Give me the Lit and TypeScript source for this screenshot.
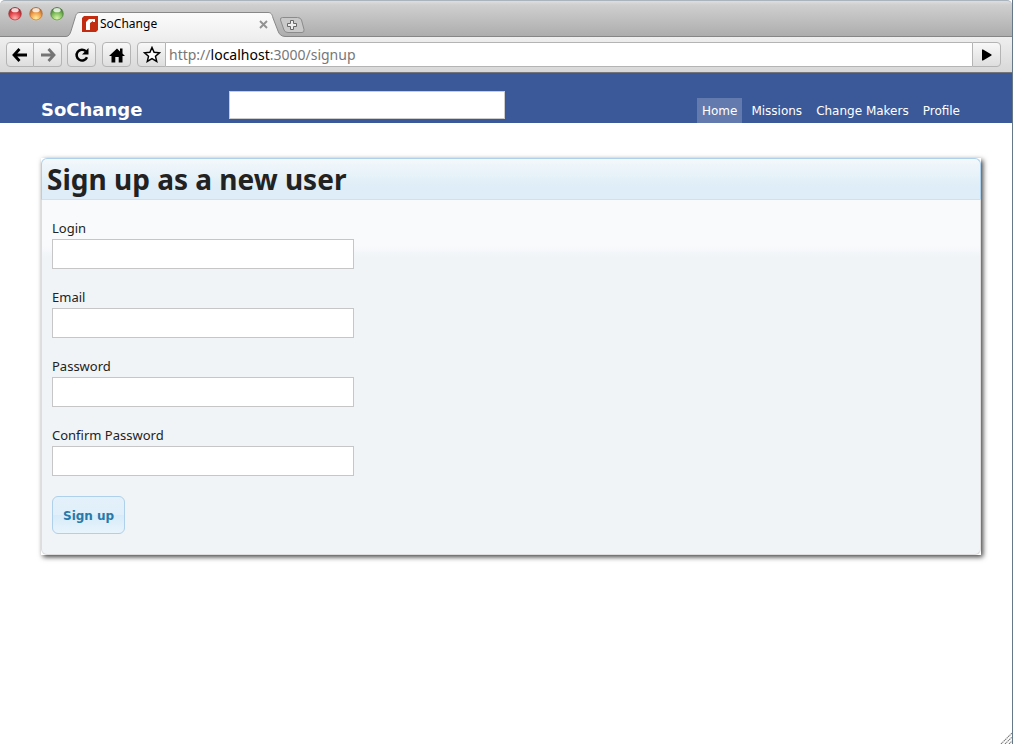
import { LitElement, html, css } from "lit";
import { customElement, property } from "lit/decorators.js";

@customElement("browser-chrome")
class BrowserChrome extends LitElement {
  @property() page = "";

  static styles = css`
    :host { display: block; font-family: "Noto Sans", "Open Sans", sans-serif; }
    svg { display: block; }
    button { margin: 0; padding: 0; font: inherit; color: #000; }
    .titlebar {
      display: flex; align-items: flex-end; height: 37px; box-sizing: border-box;
      border-top: 1px solid #a9b4bd; border-bottom: 1px solid #868686;
      border-radius: 5px 5px 0 0;
      background: linear-gradient(#dedede, #cfcfcf 4px, #adadad);
    }
    .lights { display: flex; gap: 7px; align-self: flex-start; padding: 5px 2px 0 8px; }
    .light { width: 14px; height: 15px; border: 0; background: none; }
    .tab { display: flex; height: 25px; margin-bottom: -1px; }
    .edge { flex: none; }
    .tab-body {
      display: flex; align-items: center; width: 188px; box-sizing: border-box; padding: 0 0 2px 2px;
      border-top: 1px solid #888; background: linear-gradient(#fbfbfb, #efefef);
    }
    .tab-title { flex: 1; font-size: 12px; line-height: 16px; padding-left: 2px; }
    .close { border: 0; background: none; }
    .new-tab { border: 0; background: none; margin-bottom: 3px; margin-left: -6px; }
    .toolbar {
      display: flex; align-items: center; height: 36px; box-sizing: border-box;
      padding: 0 11px 0 6px; border-bottom: 1px solid #73777d;
      background: linear-gradient(#efefef, #d8d8d8);
    }
    .tool {
      display: flex; align-items: center; justify-content: center;
      width: 29px; height: 25px; box-sizing: border-box;
      border: 1px solid #b4b4b4; border-radius: 4px;
      background: linear-gradient(#f8f8f8, #dedede);
    }
    .back { width: 28px; border-radius: 4px 0 0 4px; }
    .forward { width: 28px; border-left: 0; border-radius: 0 4px 4px 0; margin-right: 5px; }
    .reload, .home { margin-right: 6px; }
    .star { border-radius: 4px 0 0 4px; }
    .go { border-radius: 0 4px 4px 0; }
    .address {
      flex: 1; display: flex; align-items: center; height: 25px; box-sizing: border-box;
      border: solid #b4b4b4; border-width: 1px 0; padding-left: 3px; background: #fff;
      font-size: 14px; line-height: 20px; color: #777;
    }
    .host { color: #000; }
  `;

  light(name: string, dark: string, mid: string, pale: string) {
    return html`<button class="light" aria-label=${name}>
      <svg width="14" height="15" viewBox="0 0 14 15">
        <defs>
          <radialGradient id=${"g" + name} cx=".5" cy=".85" r=".8">
            <stop offset="0" stop-color=${pale} /><stop offset=".55" stop-color=${mid} /><stop offset="1" stop-color=${dark} />
          </radialGradient>
        </defs>
        <circle cx="7" cy="8.4" r="6.4" fill="#eee" opacity=".7" />
        <circle cx="7" cy="7.8" r="6.3" fill=${`url(#g${name})`} stroke=${dark} stroke-width=".9" stroke-opacity=".7" />
        <ellipse cx="7" cy="4.2" rx="3.6" ry="2.1" fill="#fff" opacity=".8" />
      </svg>
    </button>`;
  }

  render() {
    return html`
      <div class="titlebar">
        <div class="lights">
          ${this.light("close", "#8e2227", "#e4464b", "#ffb3ae")}
          ${this.light("minimize", "#a75f28", "#f0a04c", "#fff0a0")}
          ${this.light("zoom", "#3f7330", "#7fbd5c", "#d9f5a8")}
        </div>
        <div class="tab">
          <svg class="edge" width="14" height="25" viewBox="0 0 14 25">
            <defs><linearGradient id="left" x2="0" y2="1"><stop stop-color="#fbfbfb" /><stop offset="1" stop-color="#efefef" /></linearGradient></defs>
            <path d="M0 25V24.5C3 24.3 4 22 5 19L9 6C10 2 11 .5 14 .5V25Z" fill="url(#left)" />
            <path d="M0 24.5C3 24.3 4 22 5 19L9 6C10 2 11 .5 14 .5" fill="none" stroke="#888" />
          </svg>
          <div class="tab-body">
            <svg width="16" height="16" viewBox="0 0 16 16">
              <path d="M2 0H16V14L14 16H0V2Z" fill="#c22d12" />
              <path d="M4 14V6L7 3H13V6H11V5L8 7V14Z" fill="#fff" />
            </svg>
            <span class="tab-title">${this.page}</span>
            <button class="close" aria-label="Close tab">
              <svg width="9" height="9" viewBox="0 0 9 9"><path d="M1 1L8 8M8 1L1 8" stroke="#929292" stroke-width="1.9" /></svg>
            </button>
          </div>
          <svg class="edge" width="17" height="25" viewBox="0 0 17 25">
            <defs><linearGradient id="right" x2="0" y2="1"><stop stop-color="#fbfbfb" /><stop offset="1" stop-color="#efefef" /></linearGradient></defs>
            <path d="M17 25V24.5C13 24.3 11 22 10 19L5 6C4 2 3 .5 0 .5V25Z" fill="url(#right)" />
            <path d="M17 24.5C13 24.3 11 22 10 19L5 6C4 2 3 .5 0 .5" fill="none" stroke="#888" />
          </svg>
        </div>
        <button class="new-tab" aria-label="New tab">
          <svg width="27" height="16" viewBox="0 0 27 16">
            <path d="M3.5 .5H18.5Q21.5 .5 22.5 3L25 12.5Q25.5 15.5 23 15.5H9Q6 15.5 5 13L1.5 3Q1 .5 3.5 .5Z" fill="#c9c9c9" stroke="#8b8b8b" />
            <path d="M11.5 3.5H14.5V6.5H17.5V9.5H14.5V12.5H11.5V9.5H8.5V6.5H11.5Z" fill="#eee" stroke="#686868" />
          </svg>
        </button>
      </div>
      <div class="toolbar">
        <button class="tool back" aria-label="Back">
          <svg width="16" height="14" viewBox="0 0 16 14"><path d="M7.5 1L2 7L7.5 13M2 7H15" fill="none" stroke="#000" stroke-width="2.8" /></svg>
        </button>
        <button class="tool forward" aria-label="Forward">
          <svg width="16" height="14" viewBox="0 0 16 14"><path d="M8.5 1L14 7L8.5 13M14 7H1" fill="none" stroke="#747474" stroke-width="2.8" /></svg>
        </button>
        <button class="tool reload" aria-label="Reload">
          <svg width="16" height="16" viewBox="0 0 16 16">
            <path d="M11.8 4.2A5.4 5.4 0 1 0 13 10.2" fill="none" stroke="#000" stroke-width="2.5" />
            <path d="M14.5 1V7.5H8Z" fill="#000" />
          </svg>
        </button>
        <button class="tool home" aria-label="Home">
          <svg width="16" height="16" viewBox="0 0 16 16"><path d="M8 1.5L11 4.5V1.5H13.5V6.5L16 9H13.5V15.5H9.7V10H6.3V15.5H2.5V9H0Z" fill="#000" /></svg>
        </button>
        <button class="tool star" aria-label="Bookmark">
          <svg width="18" height="17" viewBox="0 0 18 17"><path d="M9 1.5L11.1 6.3L16.5 6.8L12.5 10.3L13.7 15.4L9 12.7L4.3 15.4L5.5 10.3L1.5 6.8L6.9 6.3Z" fill="#fff" stroke="#000" stroke-width="1.5" /></svg>
        </button>
        <div class="address"><span>http://<span class="host">localhost</span>:3000/signup</span></div>
        <button class="tool go" aria-label="Go">
          <svg width="11" height="12" viewBox="0 0 11 12"><path d="M1 .5H2L10.5 5.5V6.5L2 11.5H1Z" fill="#000" /></svg>
        </button>
      </div>
    `;
  }
}

@customElement("site-header")
class SiteHeader extends LitElement {
  static styles = css`
    :host {
      display: flex; align-items: flex-end; height: 50px; padding: 0 47px 0 41px;
      background: #3b5998; font-family: "DejaVu Sans", Verdana, sans-serif;
    }
    .brand { width: 188px; font-size: 18px; line-height: 26px; font-weight: bold; color: #fff; text-decoration: none; }
    .search {
      width: 276px; height: 28px; box-sizing: border-box; margin: 0 0 4px;
      border: 1px solid #ccc; border-radius: 0; background: #fff; outline: 0;
    }
    nav { display: flex; gap: 4px; margin-left: auto; }
    .link {
      padding: 1px 5px 0; font-size: 12px; line-height: 24px; color: #fff; text-decoration: none;
    }
    .current { background: #627aad; }
  `;

  render() {
    const links = ["Home", "Missions", "Change Makers", "Profile"];
    return html`
      <a class="brand" href="#">SoChange</a>
      <input class="search" type="search" aria-label="Search" />
      <nav>${links.map((name, i) => html`<a class="link ${i === 0 ? "current" : ""}" href="#">${name}</a>`)}</nav>
    `;
  }
}

@customElement("signup-panel")
class SignupPanel extends LitElement {
  static styles = css`
    :host {
      display: block; background: #fff;
      box-shadow: 2px 2px 5px rgba(0, 0, 0, .75);
      font-family: "Noto Sans", "Open Sans", sans-serif; color: #222;
    }
    .title {
      height: 42px; box-sizing: border-box; margin: 0; padding-left: 5px;
      border: 1px solid #aed0ea; border-bottom-color: #ddd; border-radius: 6px 6px 0 0;
      background: linear-gradient(#f3f8fb, #deedf7 70%);
      font-size: 28px; line-height: 40px; font-weight: bold;
    }
    .form {
      display: flex; flex-direction: column; align-items: flex-start; gap: 20px;
      padding: 20px 10px; border: 1px solid #ddd; border-top: 0; border-radius: 0 0 6px 6px;
      background: linear-gradient(#f9fafc, #f9fafc 46px, #f0f4f7 57px);
    }
    .field { display: flex; flex-direction: column; width: 302px; max-width: 100%; }
    label { font-size: 13px; line-height: 17px; padding-bottom: 2px; }
    input {
      height: 30px; box-sizing: border-box; margin: 0; border: 1px solid #c6c6c6;
      border-radius: 0; background: #fff; padding: 0 5px; font: inherit; outline: 0;
    }
    .submit {
      height: 38px; box-sizing: border-box; margin: 0; padding: 1px 10px 0;
      border: 1px solid #aed0ea; border-radius: 6px;
      background: linear-gradient(#e4f1fb, #e0effa 50%, #d7ebf9 51%, #e9f4fc);
      font-family: "DejaVu Sans", sans-serif; font-size: 12px; font-weight: bold; color: #2779aa;
    }
  `;

  render() {
    const fields = [
      ["login", "Login", "text"],
      ["email", "Email", "email"],
      ["password", "Password", "password"],
      ["confirm", "Confirm Password", "password"],
    ];
    return html`
      <h1 class="title">Sign up as a new user</h1>
      <form class="form" @submit=${(e: Event) => e.preventDefault()}>
        ${fields.map(([id, label, type]) => html`
          <div class="field"><label for=${id}>${label}</label><input id=${id} name=${id} type=${type} /></div>`)}
        <button class="submit" type="submit">Sign up</button>
      </form>
    `;
  }
}

@customElement("app-root")
class AppRoot extends LitElement {
  static styles = css`
    :host {
      display: flex; flex-direction: column; min-height: 100vh; box-sizing: border-box;
      border-right: 1px solid #65788a; background: #fff;
    }
    main { flex: 1; padding: 35px 31px 0 41px; }
    .grip { align-self: flex-end; display: block; }
  `;

  render() {
    return html`
      <browser-chrome page="SoChange"></browser-chrome>
      <site-header></site-header>
      <main><signup-panel></signup-panel></main>
      <svg class="grip" width="12" height="12" viewBox="0 0 12 12">
        <path d="M1 12L12 1M5 12L12 5M9 12L12 9" stroke="#777" stroke-width="1.1" stroke-dasharray="1.4 .6" />
      </svg>
    `;
  }
}
